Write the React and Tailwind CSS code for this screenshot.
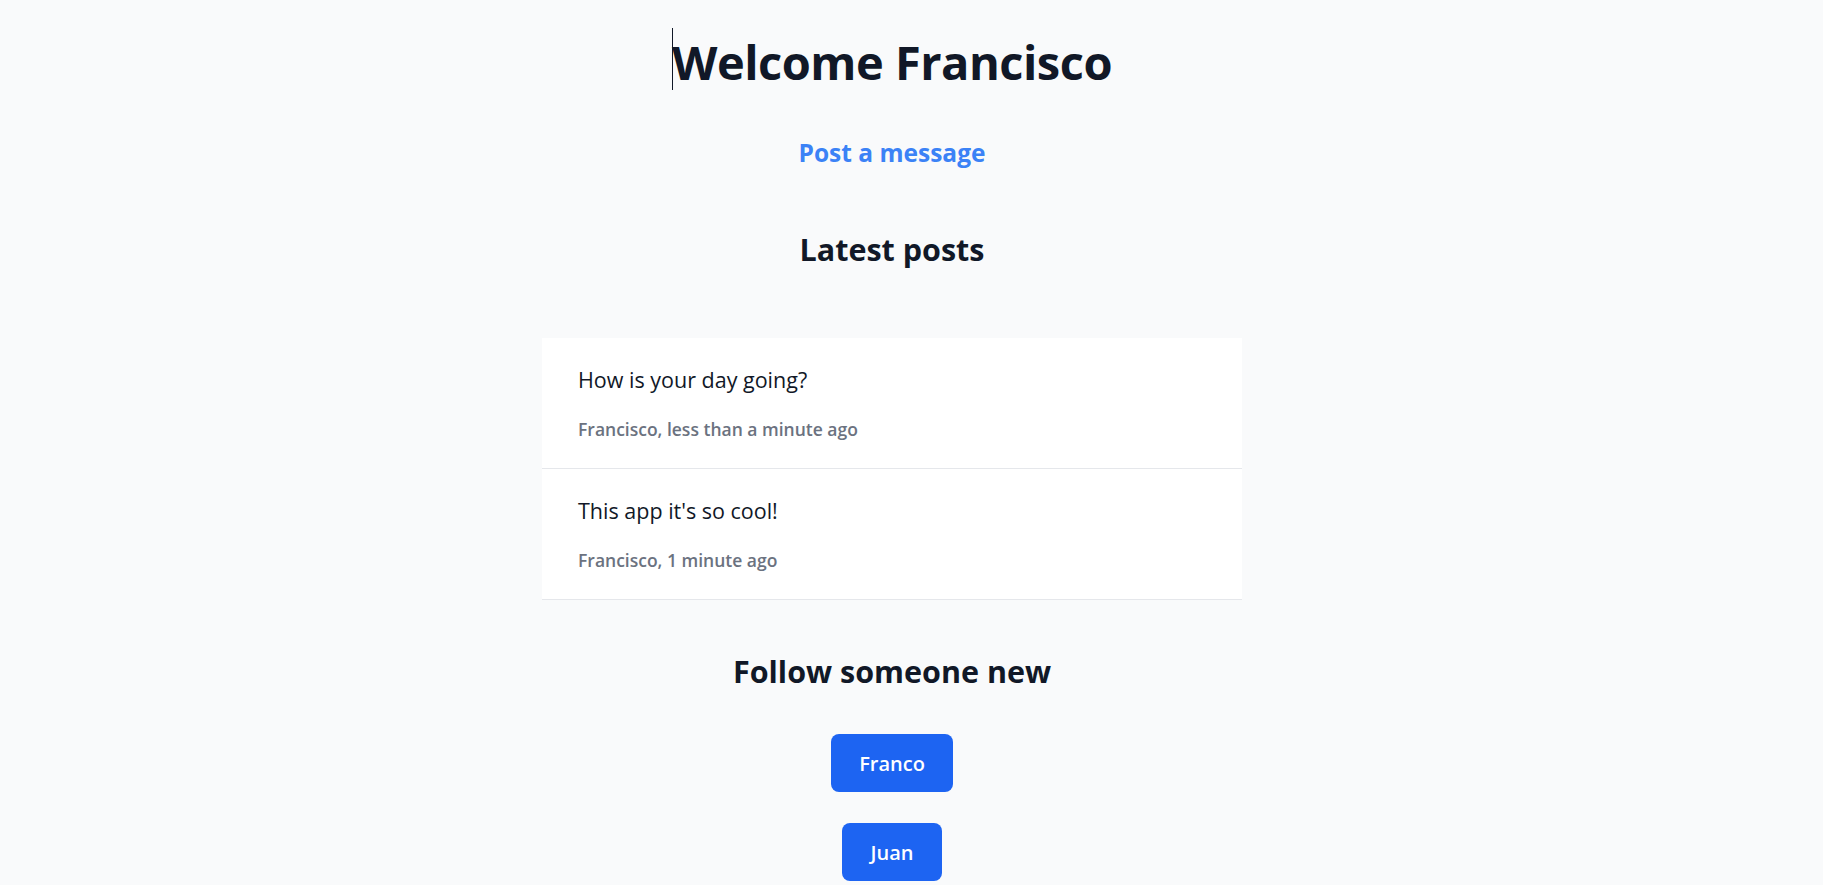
import React from "react";

const posts = [
  { text: "How is your day going?", meta: "Francisco, less than a minute ago" },
  { text: "This app it's so cool!", meta: "Francisco, 1 minute ago" },
];

const users = ["Franco", "Juan"];

export default function App() {
  return (
    <div
      className="min-h-screen bg-[#f9fafb] text-[#111827]"
      style={{ fontFamily: "'Open Sans', 'Noto Sans', sans-serif" }}
    >
      <div className="flex flex-col items-center pr-[39px]">
        <h1 className="relative mt-[31px] text-[47px] leading-[62px] font-bold tracking-[-0.5px]">
          <span className="absolute left-0 top-[-3px] h-[62px] w-px bg-[#111827]" />
          Welcome Francisco
        </h1>
        <a className="mt-[44px] text-[24.5px] leading-[32px] font-bold text-[#3b82f6] cursor-pointer">
          Post a message
        </a>
        <h2 className="mt-[62px] text-[30.5px] leading-[36px] font-bold">Latest posts</h2>
        <div className="mt-[71px] w-[700px] flex flex-col">
          {posts.map((p) => (
            <div
              key={p.text}
              className="bg-white px-9 pt-[28px] pb-[27px] border-b border-[#e5e7eb]"
            >
              <p className="text-[21.5px] leading-[28px] text-[#111827]">{p.text}</p>
              <p className="mt-[23px] text-[17.5px] leading-[24px] font-semibold text-[#6b7280]">
                {p.meta}
              </p>
            </div>
          ))}
        </div>
        <h2 className="mt-[53px] text-[30.5px] leading-[36px] font-bold">Follow someone new</h2>
        <div className="mt-[45px] flex flex-col items-center gap-[31px] pb-10">
          {users.map((u) => (
            <button
              key={u}
              className="rounded-lg bg-[#1d64f2] px-[28px] pt-[16px] pb-[14px] text-[20px] leading-[28px] font-semibold text-white"
            >
              {u}
            </button>
          ))}
        </div>
      </div>
    </div>
  );
}
